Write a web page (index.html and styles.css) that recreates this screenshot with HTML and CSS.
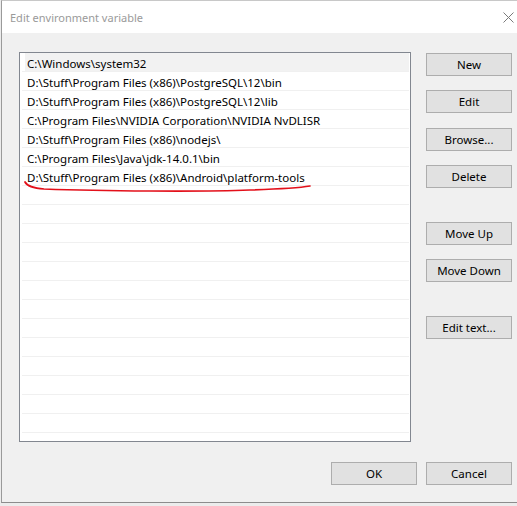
FILE: index.html
```
<!DOCTYPE html>
<html>
<head>
<meta charset="utf-8">
<link rel="stylesheet" href="styles.css">
</head>
<body>
<div class="window">
  <div class="titlebar">
    <span class="title">Edit environment variable</span>
    <svg class="close" width="11" height="11" viewBox="0 0 11 11"><path d="M0.5 0.5 L10.5 10.5 M10.5 0.5 L0.5 10.5" stroke="#7a7a7a" stroke-width="1" fill="none"/></svg>
  </div>
  <div class="content">
    <div class="main">
      <div class="list">
        <div class="row sel">C:\Windows\system32</div>
        <div class="row">D:\Stuff\Program Files (x86)\PostgreSQL\12\bin</div>
        <div class="row">D:\Stuff\Program Files (x86)\PostgreSQL\12\lib</div>
        <div class="row">C:\Program Files\NVIDIA Corporation\NVIDIA NvDLISR</div>
        <div class="row">D:\Stuff\Program Files (x86)\nodejs\</div>
        <div class="row">C:\Program Files\Java\jdk-14.0.1\bin</div>
        <div class="row">D:\Stuff\Program Files (x86)\Android\platform-tools</div>
        <div class="row"></div>
        <div class="row"></div>
        <div class="row"></div>
        <div class="row"></div>
        <div class="row"></div>
        <div class="row"></div>
        <div class="row"></div>
        <div class="row"></div>
        <div class="row"></div>
        <div class="row"></div>
        <div class="row"></div>
        <div class="row"></div>
        <div class="row"></div>
      </div>
      <div class="side">
        <button class="btn b-new">New</button>
        <button class="btn b-edit">Edit</button>
        <button class="btn b-browse">Browse...</button>
        <button class="btn b-delete">Delete</button>
        <button class="btn b-up">Move Up</button>
        <button class="btn b-down">Move Down</button>
        <button class="btn b-text">Edit text...</button>
      </div>
    </div>
    <div class="footer">
      <button class="btn">OK</button>
      <button class="btn">Cancel</button>
    </div>
  </div>
</div>
<svg class="scribble" width="517" height="506" viewBox="0 0 517 506"><path d="M25 182 C27 186 32 188 44 189 C100 191 200 192 250 190 C280 189 298 188 310 186" stroke="#e3101a" stroke-width="1.7" fill="none" stroke-linecap="round"/></svg>
</body>
</html>
```
FILE: styles.css
```
html, body {
  margin: 0;
  padding: 0;
}
body {
  width: 517px;
  height: 506px;
  overflow: hidden;
  background: #ececec;
  font-family: "Noto Sans", "DejaVu Sans", sans-serif;
  font-size: 11.5px;
  color: #000;
  position: relative;
}
.window {
  margin-left: 1px;
  border-left: 1px solid #9a9a9a;
  border-top: 1px solid #c8c8c8;
  border-bottom: 1px solid #8c8c8c;
  background: #f0f0f0;
}
.titlebar {
  height: 32px;
  background: #fff;
  display: flex;
  align-items: center;
  justify-content: space-between;
  padding-left: 8px;
  padding-right: 2px;
}
.title {
  font-size: 11px;
  line-height: 32px;
  padding-top: 2px;
  color: #9a9a9a;
}
.close {
  display: block;
  margin-right: 1px;
}
.content {
  padding: 19px 5px 17px 17px;
}
.main {
  display: flex;
  align-items: flex-start;
}
.list {
  height: 388px;
  border: 1px solid #828790;
  background: #fff;
  padding: 0 1px 0 2px;
  box-sizing: content-box;
  width: 387px;
  overflow: hidden;
}
.row {
  height: 15px;
  padding-top: 3px;
  line-height: 15px;
  padding-left: 5px;
  border-bottom: 1px solid #f0f0f0;
  white-space: nowrap;
}
.row.sel {
  background: linear-gradient(to right, transparent 3px, #f2f2f2 3px);
}
.side {
  margin-left: 15px;
  display: flex;
  flex-direction: column;
}
.btn {
  width: 86px;
  height: 23px;
  box-sizing: border-box;
  border: 1px solid #adadad;
  background: #e1e1e1;
  font-family: inherit;
  font-size: 11.5px;
  color: #000;
  line-height: 20px;
  padding: 1px 0 0 0;
  margin: 0;
  text-align: center;
}
.b-new { margin-top: 1px; }
.b-edit { margin-top: 14px; }
.b-browse { margin-top: 15px; }
.b-delete { margin-top: 14px; }
.b-up { margin-top: 34px; }
.b-down { margin-top: 14px; }
.b-text { margin-top: 34px; }
.footer {
  display: flex;
  justify-content: flex-end;
  gap: 9px;
  margin-top: 20px;
}
.scribble {
  position: absolute;
  left: 0;
  top: 0;
  pointer-events: none;
}
```
